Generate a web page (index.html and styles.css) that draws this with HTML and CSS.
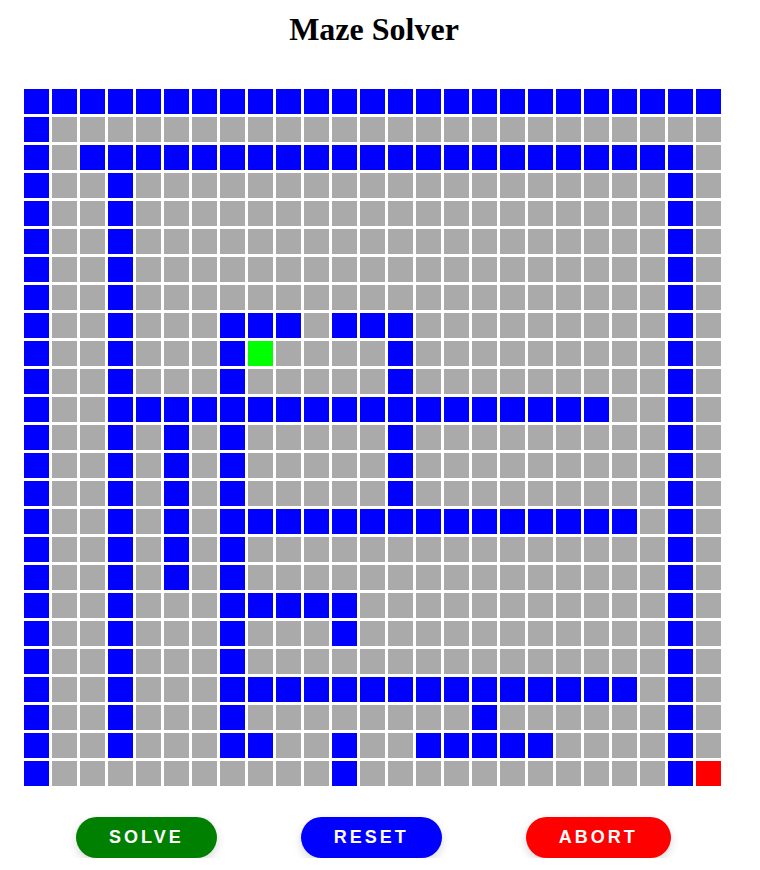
FILE: index.html
```html
<!DOCTYPE html>
<html lang="en">
<head>
    <meta charset="UTF-8">
    <meta name="viewport" content="width=device-width, initial-scale=1.0">
    <title>Maze Solver</title>
    <link rel="stylesheet" href="styles.css">
</head>
<body>
    <div class="page">
        <h1>Maze Solver</h1>

        <div id="maze" class="maze">
            <!-- cells are built from the map below -->
        </div>

        <div class="controls">
            <button id="solveButton" class="btn btn-solve">Solve</button>
            <button id="resetButton" class="btn btn-reset">Reset</button>
            <button id="abortButton" class="btn btn-abort">Abort</button>
        </div>
    </div>

    <script>
        document.addEventListener("DOMContentLoaded", function() {
            const maze = document.getElementById("maze");

            // # wall, . open, S start, E end
            const map = [
                "#########################",
                "#........................",
                "#.######################.",
                "#..#...................#.",
                "#..#...................#.",
                "#..#...................#.",
                "#..#...................#.",
                "#..#...................#.",
                "#..#...###.###.........#.",
                "#..#...#S....#.........#.",
                "#..#...#.....#.........#.",
                "#..##################..#.",
                "#..#.#.#.....#.........#.",
                "#..#.#.#.....#.........#.",
                "#..#.#.#.....#.........#.",
                "#..#.#.###############.#.",
                "#..#.#.#...............#.",
                "#..#.#.#...............#.",
                "#..#...#####...........#.",
                "#..#...#...#...........#.",
                "#..#...#...............#.",
                "#..#...###############.#.",
                "#..#...#........#......#.",
                "#..#...##..#..#####....#.",
                "#..........#...........#E"
            ];

            const kinds = { "#": "wall", ".": "open", "S": "start", "E": "end" };

            map.forEach(row => {
                row.split("").forEach(ch => {
                    const cell = document.createElement("div");
                    cell.classList.add("cell", kinds[ch]);
                    maze.appendChild(cell);
                });
            });

            document.getElementById("resetButton").addEventListener("click", function() {
                maze.querySelectorAll(".path").forEach(c => c.classList.remove("path"));
            });
        });
    </script>
</body>
</html>
```

FILE: styles.css
```css
body {
    margin: 0;
    padding: 0;
    background-color: #fff;
    color: #000;
}
.page {
    width: 700px;
    margin-left: 24px;
    padding-top: 11px;
}
h1 {
    margin: 0;
    font-family: 'Liberation Serif', serif;
    font-size: 32px;
    line-height: 36px;
    font-weight: bold;
    text-align: center;
}
.maze {
    margin-top: 42px;
    display: grid;
    grid-template-columns: repeat(25, 25px);
    grid-auto-rows: 25px;
    gap: 3px;
}
.cell {
    width: 25px;
    height: 25px;
}
.cell.wall {
    background-color: #0000ff;
}
.cell.open {
    background-color: #aaaaaa;
}
.cell.start {
    background-color: #00ff00;
}
.cell.end {
    background-color: #ff0000;
}
.controls {
    display: flex;
    gap: 84px;
    margin-top: 31px;
    padding-left: 52px;
}
.btn {
    padding: 10px 33px;
    border: none;
    border-radius: 21px;
    color: #fff;
    font-family: 'Liberation Sans', Arial, sans-serif;
    font-size: 18px;
    line-height: 21px;
    font-weight: bold;
    letter-spacing: 3px;
    text-transform: uppercase;
    cursor: pointer;
    box-shadow: 0 4px 10px rgba(0, 0, 0, 0.15);
}
.btn-solve {
    background-color: #008000;
}
.btn-reset {
    background-color: #0000ff;
}
.btn-abort {
    background-color: #ff0000;
}
```
